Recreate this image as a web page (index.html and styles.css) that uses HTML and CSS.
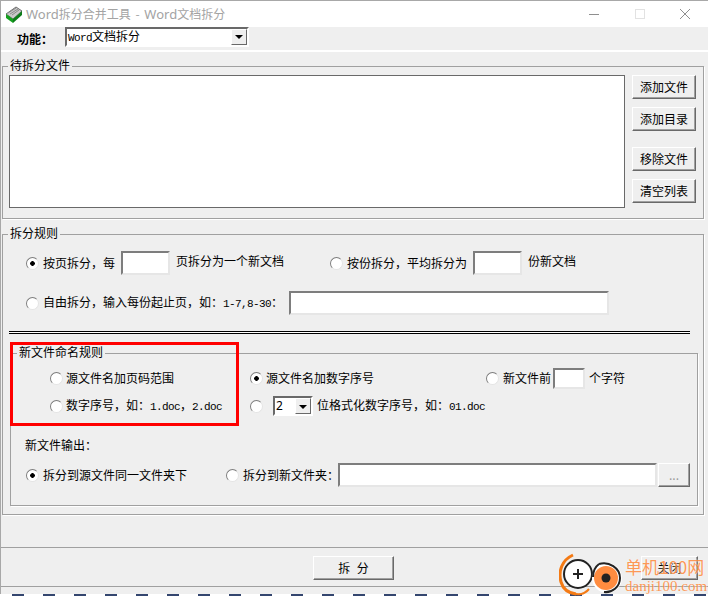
FILE: index.html
```html
<!DOCTYPE html>
<html lang="zh-CN">
<head>
    <meta charset="UTF-8">
    <meta name="viewport" content="width=device-width, initial-scale=1.0">
    <title>Word拆分合并工具 - Word文档拆分</title>
    <link rel="stylesheet" href="styles.css">
</head>
<body>

    <div class="window">
        <div class="titlebar">
            <svg class="app-icon" width="18" height="18" viewBox="0 0 18 18">
                <path d="M1 9 L11 2 L17 6 L8 14 Z" fill="#c9c9c9" stroke="#6e6e6e" stroke-width="1"/>
                <path d="M3 8 L11 3 M5 9 L13 4 M7 10 L14 5" stroke="#8a8a8a" stroke-width="1"/>
                <path d="M1 9 L8 14 L8 18 L1 13 Z" fill="#14a01e"/>
                <path d="M8 14 L17 6 L17 10 L8 18 Z" fill="#0c7c18"/>
            </svg>
            <span class="title-text"><span class="title-en">Word</span>拆分合并工具 - <span class="title-en">Word</span>文档拆分</span>
            <div class="win-buttons">
                <span class="win-btn">
                    <svg width="12" height="12" viewBox="0 0 12 12"><path d="M1 6.5 H11" stroke="#8f8f8f"/></svg>
                </span>
                <span class="win-btn">
                    <svg width="12" height="12" viewBox="0 0 12 12"><rect x="1.5" y="1.5" width="9" height="9" fill="none" stroke="#e2e2e2"/></svg>
                </span>
                <span class="win-btn">
                    <svg width="12" height="12" viewBox="0 0 12 12"><path d="M1 1 L11 11 M11 1 L1 11" stroke="#8f8f8f"/></svg>
                </span>
            </div>
        </div>

        <div class="toolbar">
            <span class="func-label">功能&#xFF1A;</span>
            <div class="combo combo-func">
                <span class="combo-text"><span class="mono">Word</span>文档拆分</span>
                <span class="combo-arrow"></span>
            </div>
        </div>

        <fieldset class="group group-files">
            <legend>待拆分文件</legend>
            <div class="file-area">
                <div class="file-list"></div>
                <div class="file-buttons">
                    <button class="btn">添加文件</button>
                    <button class="btn">添加目录</button>
                    <button class="btn btn-spaced">移除文件</button>
                    <button class="btn">清空列表</button>
                </div>
            </div>
        </fieldset>

        <fieldset class="group group-rules">
            <legend>拆分规则</legend>

            <div class="rule-row">
                <label class="opt"><input type="radio" name="rule" checked><span>按页拆分&#xFF0C;每</span></label>
                <input type="text" class="field field-count count-a">
                <span class="after-a">页拆分为一个新文档</span>
                <label class="opt opt-b"><input type="radio" name="rule"><span>按份拆分&#xFF0C;平均拆分为</span></label>
                <input type="text" class="field field-count count-b">
                <span class="after-b">份新文档</span>
            </div>

            <div class="rule-row rule-row-free">
                <label class="opt"><input type="radio" name="rule"><span>自由拆分&#xFF0C;输入每份起止页&#xFF0C;如&#xFF1A;<span class="mono">1-7,8-30</span>&#xFF1A;</span></label>
                <input type="text" class="field field-free">
            </div>

            <div class="separator"></div>

            <fieldset class="group group-naming">
                <legend>新文件命名规则</legend>

                <div class="naming-grid">
                    <label class="opt opt-tight"><input type="radio" name="naming"><span>源文件名加页码范围</span></label>
                    <label class="opt opt-tight"><input type="radio" name="naming" checked><span>源文件名加数字序号</span></label>
                    <div class="opt">
                        <input type="radio" name="naming">
                        <span>新文件前</span>
                        <input type="text" class="field field-prefix">
                        <span>个字符</span>
                    </div>

                    <label class="opt opt-tight"><input type="radio" name="naming"><span>数字序号&#xFF0C;如&#xFF1A;<span class="mono">1.doc</span>&#xFF0C;<span class="mono">2.doc</span></span></label>
                    <div class="opt opt-format">
                        <input type="radio" name="naming">
                        <div class="combo combo-digits">
                            <span class="combo-text combo-digit">2</span>
                            <span class="combo-arrow"></span>
                        </div>
                        <span>位格式化数字序号&#xFF0C;如&#xFF1A;<span class="mono">01.doc</span></span>
                    </div>
                </div>

                <div class="output-label">新文件输出&#xFF1A;</div>

                <div class="output-row">
                    <label class="opt opt-same"><input type="radio" name="output" checked><span>拆分到源文件同一文件夹下</span></label>
                    <label class="opt"><input type="radio" name="output"><span>拆分到新文件夹&#xFF1A;</span></label>
                    <input type="text" class="field field-folder">
                    <button class="btn btn-browse">...</button>
                </div>
            </fieldset>
        </fieldset>

        <div class="footer">
            <button class="btn btn-split">拆 分</button>
            <button class="btn btn-close">关闭</button>
        </div>
    </div>

    <div class="red-box"></div>

    <div class="watermark">
        <svg width="68" height="44" viewBox="0 0 68 44">
            <path d="M14 2 C3 7 -1 18 2 29 C4 36 9 40 17 41" fill="none" stroke="#f47a14" stroke-width="3"/>
            <path d="M30 36 C25 42 18 42 13 40" fill="none" stroke="#f47a14" stroke-width="2"/>
            <circle cx="19" cy="21" r="14" fill="#fff" stroke="#222" stroke-width="2"/>
            <path d="M14 21 H24 M19 16 V26" stroke="#222" stroke-width="2"/>
            <circle cx="48" cy="25" r="15" fill="#fff"/>
            <circle cx="47" cy="25" r="12" fill="#ff8c40"/>
            <path d="M40 11 C50 8 61 15 61 25 C61 34 53 40 45 39" fill="none" stroke="#222" stroke-width="2"/>
            <path d="M34 24 C34 18 36 14 40 11" fill="none" stroke="#222" stroke-width="2"/>
            <circle cx="47" cy="25" r="4.5" fill="#222"/>
        </svg>
        <div class="wm-text">
            <div class="wm-name">单机100网</div>
            <div class="wm-url">danji100.com</div>
        </div>
    </div>

</body>
</html>
```

FILE: styles.css
```css
body {
    margin: 0;
    width: 709px;
    height: 596px;
    overflow: hidden;
    position: relative;
    background: repeating-linear-gradient(90deg, #fff 0 12px, #34466f 12px 24px, #fff 24px 31px) no-repeat left bottom / 100% 2px #fff;
    font-family: "Noto Sans CJK SC", sans-serif;
    font-size: 12px;
    line-height: 14px;
    color: #000;
}

.window {
    width: 708px;
    height: 594px;
    box-sizing: border-box;
    border-left: 1px solid #a8a8a8;
    border-top: 1px solid #a8a8a8;
    background-color: #efefef;
}

.mono {
    font-family: "Liberation Mono", monospace;
    font-size: 11px;
    letter-spacing: -0.6px;
}

/* title bar */
.titlebar {
    height: 26px;
    background-color: #fff;
    display: flex;
    align-items: center;
}

.app-icon {
    margin-left: 4px;
    flex: none;
}

.title-text {
    margin-left: 3px;
    color: #a3a3a3;
    font-size: 12px;
    word-spacing: 2px;
}

.title-en {
    font-family: "Noto Sans", sans-serif;
    font-size: 13px;
}

.win-buttons {
    margin-left: auto;
    margin-right: 0;
    display: flex;
}

.win-btn {
    width: 45.5px;
    height: 26px;
    display: flex;
    align-items: center;
    justify-content: center;
}

/* toolbar */
.toolbar {
    height: 23px;
    display: flex;
    align-items: center;
    border-bottom: 2px solid #fff;
}

.func-label {
    margin-left: 16px;
    width: 48px;
    font-weight: bold;
}

.combo {
    display: flex;
    align-items: center;
    box-sizing: border-box;
    background-color: #fff;
    border: 2px solid;
    border-color: #696969 #fff #fff #696969;
}

.combo-func {
    width: 184px;
    height: 20px;
    margin-top: -3px;
}

.combo-text {
    flex: 1;
    padding-left: 1px;
}

.combo-arrow {
    width: 16px;
    align-self: stretch;
    box-sizing: border-box;
    background-color: #efefef;
    border: 1px solid;
    border-color: #fff #696969 #696969 #fff;
    position: relative;
}

.combo-arrow::after {
    content: "";
    position: absolute;
    left: 3px;
    top: 5px;
    border-left: 4px solid transparent;
    border-right: 4px solid transparent;
    border-top: 4px solid #000;
}

/* group boxes */
.group {
    margin: 0;
    min-width: 0;
    box-sizing: border-box;
    border: 1px solid #a0a0a0;
    box-shadow: 1px 1px 0 #fff;
}

.group legend {
    padding: 0 2px 2px;
    margin-left: -1px;
    line-height: 12px;
}

.group-files {
    width: 702px;
    height: 160px;
    margin: 7px 0 0 1px;
    padding: 2px 7px 0 6px;
}

.file-area {
    display: flex;
}

.file-list {
    width: 617px;
    height: 133px;
    box-sizing: border-box;
    background-color: #fff;
    border: 1px solid #696969;
}

.file-buttons {
    margin-left: 7px;
    display: flex;
    flex-direction: column;
    gap: 8px;
}

.btn {
    width: 64px;
    height: 24px;
    padding: 0 0 2px;
    box-sizing: border-box;
    font-family: "Noto Sans CJK SC", sans-serif;
    font-size: 12px;
    color: #000;
    background-color: #efefef;
    border: 1px solid;
    border-color: #fff #696969 #696969 #fff;
    box-shadow: inset -1px -1px 0 #a0a0a0;
}

.btn-spaced {
    margin-top: 8px;
}

.group-rules {
    width: 702px;
    height: 288px;
    margin: 8px 0 0 1px;
    padding: 10px 0 0 6px;
}

.rule-row {
    display: flex;
    align-items: center;
    height: 24px;
    padding-left: 17px;
}

.rule-row-free {
    margin-top: 16px;
}

.opt {
    display: flex;
    align-items: center;
    gap: 4px;
    white-space: nowrap;
}

.opt-tight {
    gap: 3px;
}

.opt input[type="radio"] {
    appearance: none;
    flex: none;
    width: 13px;
    height: 13px;
    margin: 0;
    border-radius: 50%;
    border: 1px solid;
    border-color: #7d7d7d #e4e4e4 #e4e4e4 #7d7d7d;
    background-color: #fff;
    box-sizing: border-box;
}

.opt input[type="radio"]:checked {
    background: radial-gradient(circle, #000 0, #000 2px, #fff 2.6px);
}

.field {
    box-sizing: border-box;
    flex: none;
    padding: 0;
    background-color: #fff;
    border: 2px solid;
    border-color: #7d7d7d #e6e6e6 #e6e6e6 #7d7d7d;
    outline: none;
}

.field-count {
    width: 49px;
    height: 24px;
}

.count-a {
    margin-left: 6px;
}

.after-a {
    margin-left: 6px;
    margin-top: -4px;
}

.opt-b {
    margin-left: 46px;
}

.count-b {
    margin-left: 6px;
}

.after-b {
    margin-left: 6px;
    margin-top: -4px;
}

.field-free {
    width: 320px;
    height: 24px;
    margin-left: 6px;
}

.separator {
    width: 681px;
    height: 3px;
    margin-top: 16px;
    box-sizing: border-box;
    background-color: #fff;
    border-top: 1px solid #000;
    border-bottom: 1px solid #000;
}

/* naming group */
.group-naming {
    width: 688px;
    height: 160px;
    margin: 12px 0 0 1px;
    padding: 0 0 0 7px;
}

.naming-grid {
    display: grid;
    grid-template-columns: 200px 236px auto;
    grid-auto-rows: 22px;
    row-gap: 6px;
    margin: 7px 0 0 32px;
    align-items: center;
}

.field-prefix {
    width: 32px;
    height: 21px;
    margin-left: -2px;
}

.opt-format {
    gap: 0;
}

.combo-digits {
    width: 40px;
    height: 20px;
    margin: 0 4px 0 10px;
}

.combo-digit {
    font-family: "Noto Sans", sans-serif;
}

.combo-digits .combo-arrow::after {
    top: 6px;
}

.output-label {
    margin: 21px 0 0 7px;
}

.output-row {
    display: flex;
    align-items: center;
    height: 24px;
    margin: 11px 0 0 8px;
}

.opt-same {
    width: 200px;
}

.field-folder {
    width: 319px;
    height: 24px;
    margin-left: -1px;
}

.btn-browse {
    width: 32px;
    margin-left: 1px;
    color: #9a9a9a;
}

/* footer */
.footer {
    height: 40px;
    margin-top: 32px;
    box-sizing: border-box;
    border-top: 1px solid #a0a0a0;
    border-bottom: 1px solid #a0a0a0;
    padding: 8px 0 0 312px;
    display: flex;
    align-items: flex-start;
}

.btn-split {
    width: 81px;
    word-spacing: 4px;
}

.btn-close {
    width: 57px;
    margin-left: 247px;
}

/* overlays: annotation and site watermark */
.red-box {
    position: absolute;
    left: 10px;
    top: 342px;
    width: 223px;
    height: 78px;
    border: 3px solid #f00;
}

.watermark {
    position: absolute;
    left: 559px;
    top: 553px;
    display: flex;
}

.wm-text {
    margin-left: -2px;
    color: #ff8a3c;
    text-shadow: 0 0 2px #fff;
}

.wm-name {
    margin-top: 3px;
    font-size: 17px;
    line-height: 22px;
    opacity: 0.85;
}

.wm-url {
    font-family: "Liberation Serif", serif;
    font-size: 15px;
    line-height: 14px;
    margin-top: 1px;
    opacity: 0.85;
}
```
